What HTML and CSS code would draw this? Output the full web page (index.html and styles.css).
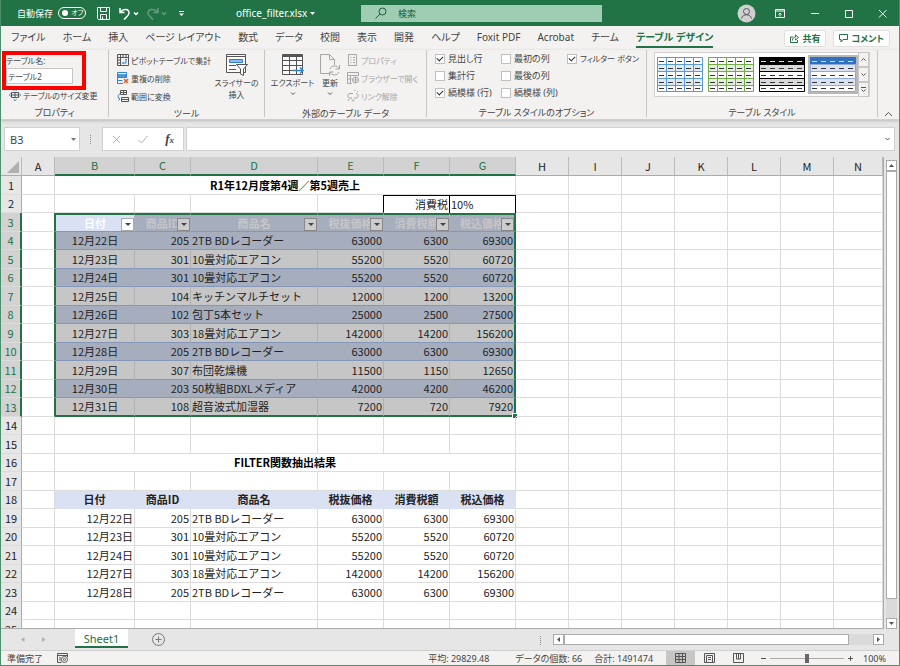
FILE: index.html
```html
<!DOCTYPE html>
<html lang="ja">
<head>
    <meta charset="UTF-8">
    <meta name="viewport" content="width=device-width, initial-scale=1.0">
    <title>office_filter.xlsx</title>
    <link rel="stylesheet" href="styles.css">
</head>
<body>
<div class="window">
    <header class="titlebar">
        <div class="quick">
            <span>自動保存</span>
            <button type="button" class="toggle"><i></i>オフ</button>
            <button type="button" aria-label="上書き保存"><svg width="13" height="13" viewBox="0 0 13 13"><path d="M.5.5h12v12h-11l-1-1zM3.5.5v4h6v-4M3.5 12.500v-5h6v5M5.500 12v-2.500" /></svg></button>
            <button type="button" class="undo" aria-label="元に戻す"><svg width="20" height="13" viewBox="0 0 20 13"><path class="thick" d="M1 1v4.500h4.500M1.500 5C4 1.500 10 1.500 10 6c0 3-3 4-5 6.500"/><path class="thick" d="M15 5.500l2 2 2-2"/></svg></button>
            <button type="button" class="faded" aria-label="やり直し"><svg width="20" height="13" viewBox="0 0 20 13"><path class="thick" d="M11 1v4.500H6.500M10.500 5C8 1.500 1 1.500 1 6c0 3 3 4 5 6.500"/><path class="thick" d="M15 5.500l2 2 2-2"/></svg></button>
            <button type="button" class="custom" aria-label="カスタマイズ"><svg width="7" height="7" viewBox="0 0 7 7"><path d="M1 1.500h5"/><path class="fill" d="M1 3.500h5l-2.500 2.500z"/></svg></button>
        </div>
        <div class="filename">office_filter.xlsx <svg width="5" height="3" viewBox="0 0 5 3"><path class="fill" d="M0 0h5L2.500 3z"/></svg></div>
        <label class="search">
            <svg width="12" height="12" viewBox="0 0 12 12"><circle cx="7.500" cy="4.500" r="3.500"/><path d="M5 7L.5 11.500"/></svg>
            <input type="text" placeholder="検索" aria-label="検索">
        </label>
        <div class="caption">
            <button type="button" class="user" aria-label="アカウント"><svg width="19" height="19" viewBox="0 0 19 19"><circle class="face" cx="9.500" cy="9.500" r="9"/><circle class="man" cx="9.500" cy="7.500" r="3"/><path class="man" d="M4.500 14.500c1-5 9-5 10 0"/></svg></button>
            <button type="button" aria-label="リボンの表示"><svg width="10" height="9" viewBox="0 0 10 9"><path d="M.5.500h9v8h-9zM.5 2h9M5 7.500V4M3.500 5.500L5 4l1.500 1.500"/></svg></button>
            <button type="button" aria-label="最小化"><svg width="9" height="9" viewBox="0 0 9 9"><path d="M1 4.500h8"/></svg></button>
            <button type="button" aria-label="最大化"><svg width="9" height="9" viewBox="0 0 9 9"><path d="M1.500 1.500h7v7h-7z"/></svg></button>
            <button type="button" aria-label="閉じる"><svg width="9" height="9" viewBox="0 0 9 9"><path d="M1 1l7.500 7.500M8.500 1L1 8.500"/></svg></button>
        </div>
    </header>

    <nav class="tabs">
        <a href="#">ファイル</a>
        <a href="#">ホーム</a>
        <a href="#">挿入</a>
        <a href="#">ページ レイアウト</a>
        <a href="#">数式</a>
        <a href="#">データ</a>
        <a href="#">校閲</a>
        <a href="#">表示</a>
        <a href="#">開発</a>
        <a href="#">ヘルプ</a>
        <a href="#">Foxit PDF</a>
        <a href="#">Acrobat</a>
        <a href="#">チーム</a>
        <a href="#" class="active">テーブル デザイン</a>
        <div class="share">
            <button type="button"><svg width="9" height="9" viewBox="0 0 9 9"><path d="M3 3H.5v5.500h7V6M2.500 6.500c0-2.500 1.500-3.500 3-3.500V1l3 2.500-3 2.500V4.500"/></svg>共有</button>
            <button type="button"><svg width="9" height="9" viewBox="0 0 9 9"><path d="M.5.500h8v5H4l-2 2.500V5.500H.5z"/></svg>コメント</button>
        </div>
    </nav>

    <section class="ribbon">
        <div class="group g-prop">
            <div class="tools stack">
                <label for="tname">テーブル名:</label>
                <input type="text" id="tname" value="テーブル2">
                <button type="button" class="cmd resize"><svg width="12" height="12" viewBox="0 0 12 12"><path d="M2.500 3.500h7v5h-7zM2.500 6h7M6 3.500v5"/><path class="blue" d="M4.500 1.500L6 .5l1.500 1M4.500 10.500l1.500 1 1.500-1M1.500 4.500L.5 6l1 1.500M10.500 4.500l1 1.500-1 1.500"/></svg>テーブルのサイズ変更</button>
                <div class="mark"></div>
            </div>
            <div class="name">プロパティ</div>
        </div>
        <div class="group g-tool">
            <div class="tools">
                <div class="list">
                    <button type="button" class="cmd"><svg width="12" height="12" viewBox="0 0 12 12"><path d="M.5.500h11v11H.5zM.5 3.500h11M3.500.5v11M6 .5v3M9 .5v3M.5 6h3M.5 9h3"/><path class="blue" d="M9 5v4H5.500M8 6l1-1 1 1M6.500 8l-1 1 1 1"/></svg>ピボットテーブルで集計</button>
                    <button type="button" class="cmd"><svg width="12" height="12" viewBox="0 0 12 12"><path class="bluefill" d="M1 3h8v2H1z"/><path class="blue" d="M.5.500h9v11h-9zM.5 3h9M.5 5.500h9M.5 8.500h5"/><path class="paper" d="M6 6h6v6H6z"/><path class="orange" d="M7 7l4 4M11 7l-4 4"/></svg>重複の削除</button>
                    <button type="button" class="cmd"><svg width="12" height="12" viewBox="0 0 12 12"><path d="M3.500.5h6v4h-6zM6.500.5v4M3.500 2.500h6M4.500 7.500h7v4h-7zM4.500 9.500h7"/><path class="blue" d="M3 4C.5 4 .5 9 3 9M1.500 7.500L3 9l-1.500 1.500"/></svg>範囲に変換</button>
                </div>
                <button type="button" class="big"><svg width="24" height="24" viewBox="0 0 24 24"><path class="line" d="M1.500 1.500h19v18h-19z"/><path d="M1.500 3.500h19M4 12.500h7M4 16.500h7"/><path class="bluefill" d="M4.500 6.500h13v3h-13z"/><path class="line" d="M11.500 11.500h11l-4 4.500v6.500l-3-1.500v-5z"/></svg><span>スライサーの<br>挿入</span></button>
            </div>
            <div class="name">ツール</div>
        </div>
        <div class="group g-ext">
            <div class="tools">
                <button type="button" class="big"><svg width="24" height="24" viewBox="0 0 24 24"><path class="line" d="M1.500 1.500h20v20h-20z"/><path class="dark" d="M1.500 3h20"/><path d="M1.500 7.500h20M1.500 12.500h20M1.500 17.500h20M8.500 1.500v20M15.500 1.500v20"/><path class="blue thick" d="M12 17.500h10M19 14.500l3 3-3 3"/></svg><span>エクスポート</span><svg class="chev" width="6" height="4" viewBox="0 0 6 4"><path d="M1 .5l2 2 2-2"/></svg></button>
                <button type="button" class="big narrow"><svg class="dim" width="24" height="24" viewBox="0 0 24 24"><path d="M2.500 1.500h9l5 5v14h-14zM11.500 1.500v5h5"/><path class="paper" d="M11 12h13v11H11z"/><path d="M12 16c1-4 8-4 9 0M21.500 12v4h-4M21 19c-1 4-8 4-9 0M11.500 23v-4h4"/></svg><span>更新</span><svg class="chev" width="6" height="4" viewBox="0 0 6 4"><path d="M1 .5l2 2 2-2"/></svg></button>
                <div class="list off">
                    <button type="button" class="cmd" disabled><svg width="12" height="12" viewBox="0 0 12 12"><path d="M1.500.500h8v11h-8zM3.500 3.500h1M6 3.500h2M3.500 6h1M6 6h2M3.500 8.500h1M6 8.500h2"/></svg>プロパティ</button>
                    <button type="button" class="cmd" disabled><svg width="12" height="12" viewBox="0 0 12 12"><path d="M.5.500h11v3H.5zM.5 3.500v8h4M.5 7h4M3.500 3.500v8"/><circle cx="8.500" cy="8" r="3"/><path d="M5.500 8h6M8.500 5v6"/></svg>ブラウザーで開く</button>
                    <button type="button" class="cmd" disabled><svg width="12" height="12" viewBox="0 0 12 12"><path d="M5 8H3C0 8 0 3.500 3 3.500h3M7 8h2c3 0 3-4.500 0-4.500M8 1V0M10 2l1-1M2 9l-1 2M5 9.500L7 11.500M7 9.500L5 11.500"/></svg>リンク解除</button>
                </div>
            </div>
            <div class="name">外部のテーブル データ</div>
        </div>
        <div class="group g-opt">
            <div class="tools checks">
                <label><input type="checkbox" checked>見出し行</label>
                <label><input type="checkbox">最初の列</label>
                <label class="long"><input type="checkbox" checked>フィルター ボタン</label>
                <label><input type="checkbox">集計行</label>
                <label class="wide"><input type="checkbox">最後の列</label>
                <label><input type="checkbox" checked>縞模様 (行)</label>
                <label><input type="checkbox">縞模様 (列)</label>
            </div>
            <div class="name">テーブル スタイルのオプション</div>
        </div>
        <div class="group g-style">
            <div class="tools">
                <div class="gallery">
                    <button type="button" class="s-blue" aria-label="青"><svg width="46" height="35" viewBox="0 0 46 35"><path class="shade" d="M0 7h46v7H0zM0 21h46v7H0z"/><path class="rule" d="M.5.500h45v34H.5zM0 7.500h46M0 14.500h46M0 21.500h46M0 28.500h46M9.500 0v35M18.500 0v35M27.500 0v35M36.500 0v35"/><path class="dash" d="M2 4.500h43M2 11.500h43M2 18.500h43M2 25.500h43M2 31.500h43"/></svg></button>
                    <button type="button" class="s-green" aria-label="緑"><svg width="46" height="35" viewBox="0 0 46 35"><path class="shade" d="M0 7h46v7H0zM0 21h46v7H0z"/><path class="rule" d="M.5.500h45v34H.5zM0 7.500h46M0 14.500h46M0 21.500h46M0 28.500h46M9.500 0v35M18.500 0v35M27.500 0v35M36.500 0v35"/><path class="dash" d="M2 4.500h43M2 11.500h43M2 18.500h43M2 25.500h43M2 31.500h43"/></svg></button>
                    <button type="button" class="s-black" aria-label="黒"><svg width="46" height="35" viewBox="0 0 46 35"><path class="shade" d="M0 7h46v7H0zM0 21h46v7H0z"/><path class="rule" d="M.5.500h45v34H.5zM0 7.500h46M0 14.500h46M0 21.500h46M0 28.500h46"/><path class="head" d="M0 0h46v7H0z"/><path class="dash" d="M2 11.500h43M2 18.500h43M2 25.500h43M2 31.500h43"/><path class="dash light" d="M2 4.500h43"/></svg></button>
                    <button type="button" class="s-navy" aria-label="濃い青"><svg width="46" height="35" viewBox="0 0 46 35"><path class="shade" d="M0 7h46v7H0zM0 21h46v7H0z"/><path class="rule" d="M.5.500h45v34H.5zM0 7.500h46M0 14.500h46M0 21.500h46M0 28.500h46"/><path class="head" d="M0 0h46v7H0z"/><path class="dash" d="M2 11.500h43M2 18.500h43M2 25.500h43M2 31.500h43"/><path class="dash light" d="M2 4.500h43"/></svg></button>
                    <div class="pager">
                        <button type="button" aria-label="上へ"><svg width="7" height="5" viewBox="0 0 7 5"><path d="M1.500 3.500l2-2 2 2"/></svg></button>
                        <button type="button" aria-label="下へ"><svg width="7" height="5" viewBox="0 0 7 5"><path d="M1.500 1.500l2 2 2-2"/></svg></button>
                        <button type="button" aria-label="その他"><svg width="7" height="6" viewBox="0 0 7 6"><path d="M1 .5h5M1.500 2.500l2 2 2-2"/></svg></button>
                    </div>
                </div>
            </div>
            <div class="name">テーブル スタイル</div>
        </div>
        <button type="button" class="collapse" aria-label="リボンを折りたたむ"><svg width="9" height="6" viewBox="0 0 9 6"><path d="M1 5l3.500-3.500L8 5"/></svg></button>
    </section>

    <section class="formula">
        <div class="namebox"><input type="text" value="B3" aria-label="名前ボックス"><svg width="5" height="3" viewBox="0 0 5 3"><path d="M0 0h5L2.500 3z"/></svg></div>
        <span class="dots"></span>
        <div class="fx">
            <button type="button" aria-label="キャンセル"><svg width="9" height="9" viewBox="0 0 9 9"><path d="M1 1l7 7M8 1L1 8"/></svg></button>
            <button type="button" aria-label="入力"><svg width="10" height="9" viewBox="0 0 10 9"><path d="M.5 5l3 3L9.500 1"/></svg></button>
            <button type="button" class="fn"><i>f</i><small>x</small></button>
        </div>
        <div class="entry"><input type="text" aria-label="数式バー"><svg width="7" height="5" viewBox="0 0 7 5"><path d="M1.500 1l2 2 2-2"/></svg></div>
    </section>

    <main class="sheet">
        <div class="cells">
            <table>
                <colgroup><col class="c-no"><col class="c-a"><col class="c-b"><col class="c-c"><col class="c-d"><col class="c-e"><col class="c-e"><col class="c-e"><col class="c-h"><col class="c-h"><col class="c-h"><col class="c-h"><col class="c-h"><col class="c-h"><col></colgroup>
                <thead>
                    <tr><th class="corner"></th><th>A</th><th class="on">B</th><th class="on">C</th><th class="on">D</th><th class="on">E</th><th class="on">F</th><th class="on">G</th><th>H</th><th>I</th><th>J</th><th>K</th><th>L</th><th>M</th><th>N</th></tr>
                </thead>
                <tbody>
                    <tr><th>1</th><td></td><td colspan="6" class="title">R1年12月度第4週／第5週売上</td><td></td><td></td><td></td><td></td><td></td><td></td><td></td></tr>
                    <tr><th>2</th><td></td><td></td><td></td><td></td><td class="edge"></td><td class="box num">消費税</td><td class="box">10%</td><td></td><td></td><td></td><td></td><td></td><td></td><td></td></tr>
                    <tr class="sel first"><th>3</th><td></td><td>日付<button type="button" class="filter" aria-label="日付"></button></td><td>商品ID<button type="button" class="filter" aria-label="商品ID"></button></td><td>商品名<button type="button" class="filter" aria-label="商品名"></button></td><td>税抜価格<button type="button" class="filter" aria-label="税抜価格"></button></td><td>消費税額<button type="button" class="filter" aria-label="消費税額"></button></td><td>税込価格<button type="button" class="filter" aria-label="税込価格"></button></td><td></td><td></td><td></td><td></td><td></td><td></td><td></td></tr>
                    <tr class="sel data"><th>4</th><td></td><td>12月22日</td><td>205</td><td>2TB BDレコーダー</td><td>63000</td><td>6300</td><td>69300</td><td></td><td></td><td></td><td></td><td></td><td></td><td></td></tr>
                    <tr class="sel data"><th>5</th><td></td><td>12月23日</td><td>301</td><td>10畳対応エアコン</td><td>55200</td><td>5520</td><td>60720</td><td></td><td></td><td></td><td></td><td></td><td></td><td></td></tr>
                    <tr class="sel data"><th>6</th><td></td><td>12月24日</td><td>301</td><td>10畳対応エアコン</td><td>55200</td><td>5520</td><td>60720</td><td></td><td></td><td></td><td></td><td></td><td></td><td></td></tr>
                    <tr class="sel data"><th>7</th><td></td><td>12月25日</td><td>104</td><td>キッチンマルチセット</td><td>12000</td><td>1200</td><td>13200</td><td></td><td></td><td></td><td></td><td></td><td></td><td></td></tr>
                    <tr class="sel data"><th>8</th><td></td><td>12月26日</td><td>102</td><td>包丁5本セット</td><td>25000</td><td>2500</td><td>27500</td><td></td><td></td><td></td><td></td><td></td><td></td><td></td></tr>
                    <tr class="sel data"><th>9</th><td></td><td>12月27日</td><td>303</td><td>18畳対応エアコン</td><td>142000</td><td>14200</td><td>156200</td><td></td><td></td><td></td><td></td><td></td><td></td><td></td></tr>
                    <tr class="sel data"><th>10</th><td></td><td>12月28日</td><td>205</td><td>2TB BDレコーダー</td><td>63000</td><td>6300</td><td>69300</td><td></td><td></td><td></td><td></td><td></td><td></td><td></td></tr>
                    <tr class="sel data"><th>11</th><td></td><td>12月29日</td><td>307</td><td>布団乾燥機</td><td>11500</td><td>1150</td><td>12650</td><td></td><td></td><td></td><td></td><td></td><td></td><td></td></tr>
                    <tr class="sel data"><th>12</th><td></td><td>12月30日</td><td>203</td><td>50枚組BDXLメディア</td><td>42000</td><td>4200</td><td>46200</td><td></td><td></td><td></td><td></td><td></td><td></td><td></td></tr>
                    <tr class="sel data last"><th>13</th><td></td><td>12月31日</td><td>108</td><td>超音波式加湿器</td><td>7200</td><td>720</td><td>7920<i class="handle"></i></td><td></td><td></td><td></td><td></td><td></td><td></td><td></td></tr>
                    <tr><th>14</th><td></td><td></td><td></td><td></td><td></td><td></td><td></td><td></td><td></td><td></td><td></td><td></td><td></td><td></td></tr>
                    <tr><th>15</th><td></td><td></td><td></td><td></td><td></td><td></td><td></td><td></td><td></td><td></td><td></td><td></td><td></td><td></td></tr>
                    <tr><th>16</th><td></td><td colspan="6" class="title">FILTER関数抽出結果</td><td></td><td></td><td></td><td></td><td></td><td></td><td></td></tr>
                    <tr><th>17</th><td></td><td></td><td></td><td></td><td></td><td></td><td></td><td></td><td></td><td></td><td></td><td></td><td></td><td></td></tr>
                    <tr class="head"><th>18</th><td></td><td>日付</td><td>商品ID</td><td>商品名</td><td>税抜価格</td><td>消費税額</td><td>税込価格</td><td></td><td></td><td></td><td></td><td></td><td></td><td></td></tr>
                    <tr class="data"><th>19</th><td></td><td>12月22日</td><td>205</td><td>2TB BDレコーダー</td><td>63000</td><td>6300</td><td>69300</td><td></td><td></td><td></td><td></td><td></td><td></td><td></td></tr>
                    <tr class="data"><th>20</th><td></td><td>12月23日</td><td>301</td><td>10畳対応エアコン</td><td>55200</td><td>5520</td><td>60720</td><td></td><td></td><td></td><td></td><td></td><td></td><td></td></tr>
                    <tr class="data"><th>21</th><td></td><td>12月24日</td><td>301</td><td>10畳対応エアコン</td><td>55200</td><td>5520</td><td>60720</td><td></td><td></td><td></td><td></td><td></td><td></td><td></td></tr>
                    <tr class="data"><th>22</th><td></td><td>12月27日</td><td>303</td><td>18畳対応エアコン</td><td>142000</td><td>14200</td><td>156200</td><td></td><td></td><td></td><td></td><td></td><td></td><td></td></tr>
                    <tr class="data"><th>23</th><td></td><td>12月28日</td><td>205</td><td>2TB BDレコーダー</td><td>63000</td><td>6300</td><td>69300</td><td></td><td></td><td></td><td></td><td></td><td></td><td></td></tr>
                    <tr><th>24</th><td></td><td></td><td></td><td></td><td></td><td></td><td></td><td></td><td></td><td></td><td></td><td></td><td></td><td></td></tr>
                    <tr><th>25</th><td></td><td></td><td></td><td></td><td></td><td></td><td></td><td></td><td></td><td></td><td></td><td></td><td></td><td></td></tr>
                </tbody>
            </table>
        </div>
        <div class="vscroll">
            <button type="button" aria-label="上"><svg width="5" height="3" viewBox="0 0 5 3"><path d="M0 3h5L2.500 0z"/></svg></button>
            <div class="thumb"></div>
            <div class="track"></div>
            <button type="button" aria-label="下"><svg width="5" height="3" viewBox="0 0 5 3"><path d="M0 0h5L2.500 3z"/></svg></button>
        </div>
    </main>

    <section class="sheetbar">
        <div class="move">
            <svg width="4" height="5" viewBox="0 0 4 5"><path d="M3.500 0v5L0 2.500z"/></svg>
            <svg width="4" height="5" viewBox="0 0 4 5"><path d="M0 0v5l3.500-2.500z"/></svg>
        </div>
        <a href="#" class="sheettab">Sheet1</a>
        <button type="button" class="add" aria-label="新しいシート"><svg width="13" height="13" viewBox="0 0 13 13"><circle cx="6.500" cy="6.500" r="6"/><path d="M3.500 6.500h6M6.500 3.500v6"/></svg></button>
        <span class="dots"></span>
        <div class="hscroll">
            <button type="button" aria-label="左"><svg width="3" height="5" viewBox="0 0 3 5"><path d="M3 0v5L0 2.500z"/></svg></button>
            <div class="thumb"></div>
            <div class="track"></div>
            <button type="button" aria-label="右"><svg width="3" height="5" viewBox="0 0 3 5"><path d="M0 0v5l3-2.500z"/></svg></button>
        </div>
    </section>

    <footer class="status">
        <span class="ready">準備完了</span>
        <svg width="11" height="10" viewBox="0 0 11 10"><path d="M10.500 4V.5H.5v9h4M.5 2.500h10M2 5h2M2 7h2"/><circle cx="7.500" cy="6.500" r="3"/><circle class="rec" cx="7.500" cy="6.500" r="1"/></svg>
        <span class="avg">平均: 29829.48</span>
        <span class="count">データの個数: 66</span>
        <span class="sum">合計: 1491474</span>
        <div class="views">
            <button type="button" class="on" aria-label="標準"><svg width="11" height="10" viewBox="0 0 11 10"><path d="M.5.500h10v9H.5zM.5 3.500h10M.5 6.500h10M4 .5v9M7.500.5v9"/></svg></button>
            <button type="button" aria-label="ページ レイアウト表示"><svg width="11" height="10" viewBox="0 0 11 10"><path d="M.5.500h10v9H.5zM2.500 2.500h6v7h-6zM4 4.500h3M4 6.500h3"/></svg></button>
            <button type="button" aria-label="改ページ プレビュー"><svg width="11" height="10" viewBox="0 0 11 10"><path d="M.5.500h10v9H.5zM3.500.5v5.500h4V.5M5.500.500v5.500"/></svg></button>
        </div>
        <button type="button" class="zoom" aria-label="縮小"><svg width="7" height="7" viewBox="0 0 7 7"><path d="M1 3.500h5"/></svg></button>
        <input type="range" min="0" max="100" value="50" aria-label="ズーム">
        <button type="button" class="zoom" aria-label="拡大"><svg width="7" height="7" viewBox="0 0 7 7"><path d="M1 3.500h5M3.500 1v5"/></svg></button>
        <span class="percent">100%</span>
    </footer>
</div>
</body>
</html>
```
FILE: styles.css
```css
*{
    box-sizing: border-box;
}
body{
    margin: 0;
    font-family: "Noto Sans", "Noto Sans CJK JP", sans-serif;
    font-size: 10px;
    font-feature-settings: "palt";
    color: #444;
}
button, input{
    font: inherit;
    font-feature-settings: inherit;
    color: inherit;
    margin: 0;
    padding: 0;
    border: 0;
    background: none;
    outline: none;
}
a{
    color: inherit;
    text-decoration: none;
}
svg{
    display: block;
    flex: none;
    fill: none;
    stroke: #555;
}
.window{
    display: flex;
    flex-direction: column;
    height: 100vh;
    border: 1px solid #4c8f6c;
    border-top: 0;
    background: #e6e6e6;
    overflow: hidden;
}

/* title bar */
.titlebar{
    display: flex;
    align-items: center;
    height: 26px;
    flex: none;
    background: #217346;
    color: #fff;
}
.titlebar svg{
    stroke: #fff;
}
.titlebar .thick{
    stroke-width: 1.5;
}
.titlebar .fill{
    fill: #fff;
    stroke: none;
}
.quick{
    display: flex;
    align-items: center;
    width: 235px;
    padding-left: 16px;
    font-size: 9px;
    white-space: nowrap;
}
.toggle{
    display: flex;
    align-items: center;
    gap: 3px;
    width: 28px;
    height: 12px;
    margin: 0 11px 0 5px;
    padding-left: 3px;
    border: 1px solid #fff;
    border-radius: 6px;
    font-size: 7px;
    line-height: 10px;
}
.toggle i{
    flex: none;
    width: 6px;
    height: 6px;
    border-radius: 3px;
    background: #fff;
}
.undo{
    margin: 0 8px 0 9px;
}
.faded{
    opacity: .3;
}
.custom{
    margin-left: 11px;
}
.filename{
    display: flex;
    align-items: center;
    gap: 3px;
    width: 125px;
}
.search{
    display: flex;
    align-items: center;
    gap: 11px;
    flex: 1;
    height: 17px;
    padding-left: 14px;
    background: #9fcdb3;
    color: #1c5c3a;
}
.search svg{
    stroke: #1c5c3a;
}
.search input{
    flex: 1;
    min-width: 0;
    font-size: 9px;
}
.search input::placeholder{
    color: #1c5c3a;
}
.caption{
    display: flex;
    align-items: center;
    justify-content: flex-end;
    width: 297px;
}
.caption button{
    display: flex;
    justify-content: center;
    width: 34px;
}
.caption .face{
    fill: #d0d0d0;
    stroke: none;
}
.caption .man{
    stroke: #555;
}

/* ribbon tabs */
.tabs{
    display: flex;
    align-items: center;
    gap: 17px;
    height: 24px;
    flex: none;
    padding: 0 9px 0 10px;
    background: #f3f2f1;
    white-space: nowrap;
}
.tabs a{
    line-height: 18px;
    border-bottom: 2px solid transparent;
}
.tabs .active{
    border-color: #217346;
    color: #217346;
    font-weight: bold;
}
.share{
    display: flex;
    gap: 7px;
    margin-left: auto;
}
.share button{
    display: flex;
    align-items: center;
    gap: 3px;
    height: 17px;
    padding: 0 5px;
    border: 1px solid #e1dfdd;
    border-radius: 2px;
    background: #fff;
    color: #217346;
    font-size: 9px;
    font-weight: bold;
}
.share svg{
    stroke: #217346;
}

/* ribbon */
.ribbon{
    position: relative;
    display: flex;
    height: 70px;
    flex: none;
    background: #f3f2f1;
    border-bottom: 1px solid #d0d0d0;
    box-shadow: 0 1px 3px #bbb;
    white-space: nowrap;
    z-index: 1;
}
.group{
    display: flex;
    flex-direction: column;
    flex: none;
    height: 67px;
    border-right: 1px solid #c8c6c4;
}
.g-prop{
    width: 108px;
}
.g-tool{
    width: 156px;
}
.g-ext{
    width: 162px;
}
.g-opt{
    width: 220px;
}
.g-style{
    width: 231px;
}
.tools{
    display: flex;
    flex: 1;
}
.name{
    height: 13px;
    line-height: 18px;
    text-align: center;
    font-size: 9px;
}
.stack{
    position: relative;
    flex-direction: column;
    align-items: flex-start;
    padding-left: 5px;
}
.stack label{
    line-height: 14px;
    padding-top: 4px;
    font-size: 8px;
}
.stack input{
    width: 67px;
    height: 16px;
    border: 1px solid #c8c6c4;
    background: #fff;
    padding-left: 1px;
    font-size: 8px;
}
.mark{
    position: absolute;
    top: 1px;
    left: 1px;
    width: 84px;
    height: 39px;
    border: 4px solid #f00;
}
.cmd{
    display: flex;
    align-items: center;
    gap: 2px;
    height: 18px;
    font-size: 8px;
}
.resize{
    margin: 2px 0 0 3px;
}
.list{
    padding: 1px 0 0 8px;
    width: 100px;
}
.off{
    width: 80px;
    padding-left: 7px;
}
.off .cmd{
    color: #a6a6a6;
}
.off svg, .dim{
    stroke: #a6a6a6;
}
.blue{
    stroke: #2b88d8;
}
.bluefill{
    fill: #83beec;
    stroke: #2b7cd3;
}
.orange{
    stroke: #d8622b;
    stroke-width: 1.5;
}
.paper{
    fill: #f3f2f1;
    stroke: none;
}
.line{
    fill: #fafafa;
}
.dark{
    stroke-width: 2;
}
.blue.thick{
    stroke-width: 1.5;
}
.big{
    display: flex;
    flex-direction: column;
    align-items: center;
    width: 55px;
    padding-top: 3px;
    font-size: 8px;
    line-height: 12px;
}
.narrow{
    width: 20px;
}
.chev{
    margin-top: 3px;
}
.checks{
    display: grid;
    grid-template-columns: 66px 66px 1fr;
    grid-auto-rows: 17px;
    padding-left: 8px;
}
.checks label{
    display: flex;
    align-items: center;
    gap: 3px;
    font-size: 9px;
}
.checks .long{
    font-size: 8px;
}
.checks .wide{
    grid-column: 2 / 4;
}
.checks input{
    appearance: none;
    width: 10px;
    height: 10px;
    border: 1px solid #c0c0c0;
    background: #fff;
}
.checks input:checked::before{
    content: "";
    display: block;
    width: 5px;
    height: 3px;
    margin: 1px;
    border-left: 1px solid #333;
    border-bottom: 1px solid #333;
    transform: rotate(-45deg);
}
.g-style .tools{
    padding: 2px 0 0 7px;
}
.gallery{
    display: flex;
    align-items: center;
    width: 216px;
    height: 45px;
    border: 1px solid #d0d0d0;
    background: #fff;
}
.gallery > button{
    padding: 2px;
    margin-right: 1px;
}
.gallery .rule{
    stroke: #5b9bd5;
}
.gallery .shade{
    fill: #ddebf7;
    stroke: none;
}
.gallery .dash{
    stroke: #333;
    stroke-dasharray: 5 4;
}
.gallery .light{
    stroke: #ddd;
}
.gallery .head{
    fill: #000;
    stroke: none;
}
.gallery .s-green .rule{
    stroke: #70ad47;
}
.gallery .s-green .shade{
    fill: #e2efda;
}
.gallery .s-black .rule{
    stroke: #000;
}
.gallery .s-black .shade{
    fill: #d9d9d9;
}
.gallery .s-navy{
    background: #b8b8b8;
    margin-right: 0;
}
.gallery .s-navy svg{
    background: #fff;
}
.gallery .s-navy .rule{
    stroke: #8ea9db;
}
.gallery .s-navy .shade{
    fill: #d9e1f2;
}
.gallery .s-navy .head{
    fill: #2f6fc4;
}
.pager{
    display: flex;
    flex-direction: column;
    width: 12px;
    height: 45px;
    margin-left: auto;
}
.pager button{
    display: flex;
    align-items: center;
    justify-content: center;
    flex: 1;
    border: 1px solid #c8c6c4;
    background: #f3f2f1;
}
.collapse{
    margin: 60px 6px 0 auto;
    height: 8px;
}

/* formula bar */
.formula{
    display: flex;
    align-items: flex-start;
    height: 37px;
    flex: none;
    padding: 7px 4px 0 3px;
}
.namebox, .fx, .entry{
    display: flex;
    align-items: center;
    height: 24px;
    border: 1px solid #d0d0d0;
    background: #fff;
}
.namebox{
    width: 76px;
    padding: 0 4px 0 5px;
}
.namebox input{
    width: 61px;
    font-size: 11px;
}
.namebox svg{
    fill: #777;
    stroke: none;
}
.dots{
    height: 9px;
    margin: 8px 11px 0 10px;
    border-left: 1px dotted #888;
}
.fx{
    width: 82px;
    margin-right: 2px;
}
.fx button{
    display: flex;
    justify-content: center;
    align-items: baseline;
    width: 27px;
}
.fx svg{
    stroke: #b0b0b0;
}
.fn{
    font-family: "Liberation Serif", serif;
    font-size: 13px;
    font-weight: bold;
}
.fn small{
    font-size: 9px;
    font-style: italic;
}
.entry{
    flex: 1;
    padding-right: 3px;
}
.entry input{
    flex: 1;
    min-width: 0;
    font-size: 11px;
}

/* grid */
.sheet{
    display: flex;
    flex: 1;
    min-height: 0;
}
.cells{
    flex: 1;
    overflow: hidden;
    border-right: 1px solid #ababab;
    border-bottom: 1px solid #ababab;
    font-family: "Noto Sans CJK JP", sans-serif;
    font-size: 11px;
    font-feature-settings: normal;
    color: #222;
}
table{
    width: 100%;
    table-layout: fixed;
    border-collapse: separate;
    border-spacing: 0;
    background: #fff;
}
.c-no{
    width: 21px;
}
.c-a{
    width: 33px;
}
.c-b{
    width: 80px;
}
.c-c{
    width: 56px;
}
.c-d{
    width: 127px;
}
.c-e{
    width: 66px;
}
.c-h{
    width: 53px;
}
th, td{
    position: relative;
    padding: 0 1px;
    line-height: 15px;
    white-space: nowrap;
    border-right: 1px solid #dcdcdc;
    border-bottom: 1px solid #dcdcdc;
}
th{
    padding: 0;
    background: #e6e6e6;
    font-weight: normal;
    border-right-color: #ababab;
}
thead th{
    height: 19px;
    border-right-color: #bbb;
    border-bottom-color: #ababab;
}
thead .on{
    background: #d2d2d2;
    color: #217346;
    border-bottom: 2px solid #217346;
}
.corner::after{
    content: "";
    position: absolute;
    right: 2px;
    bottom: 2px;
    border-left: 12px solid transparent;
    border-bottom: 12px solid #b0b0b0;
}
tbody tr{
    height: 18px;
}
tbody tr:nth-child(odd){
    height: 19px;
}
.title{
    text-align: center;
    font-weight: bold;
    color: #000;
}
.num{
    text-align: right;
}
.edge{
    border-right-color: #000;
}
.box{
    border-top: 1px solid #000;
    border-right-color: #000;
    border-bottom: 0;
}
.head td{
    font-weight: bold;
    text-align: center;
}
.head td:nth-child(n+3):nth-child(-n+8){
    background: #d9e1f2;
    border-color: #d9e1f2;
}
.data td{
    text-align: right;
}
.data td:nth-child(5){
    text-align: left;
}

/* selected range */
.sel th{
    background: #d2d2d2;
    color: #217346;
    border-right: 2px solid #217346;
}
.sel td:nth-child(2){
    border-right: 1px solid #217346;
}
.sel td:nth-child(3){
    text-align: center;
}
.sel td:nth-child(n+3):nth-child(-n+8){
    background: #c6c6c6;
    border-right-color: #b0b0b0;
    border-bottom-color: #8497b9;
}
.sel:nth-child(even) td:nth-child(n+3):nth-child(-n+8){
    background: #a6aebe;
    border-right-color: #a6aebe;
}
.first td:nth-child(n+3):nth-child(-n+8){
    background: #a6aebe;
    border-top: 2px solid #217346;
    border-right-color: #a6aebe;
    color: #c6c6c6;
    font-weight: bold;
    text-align: center;
}
.first td:nth-child(3):nth-child(-n+8){
    background: #d9e1f2;
    color: #fff;
}
.last td:nth-child(n+3):nth-child(-n+8){
    border-bottom: 2px solid #217346;
}
tbody .sel:nth-child(n) td:nth-child(3):nth-child(n){
    border-left: 1px solid #217346;
}
tbody .sel:nth-child(n) td:nth-child(8):nth-child(n){
    border-right: 2px solid #217346;
}
.filter{
    position: absolute;
    right: 0;
    bottom: 0;
    width: 13px;
    height: 13px;
    border: 1px solid #888;
    background: #ccc;
}
td:nth-child(3) .filter{
    background: #fff;
    border-color: #aaa;
}
.filter::before{
    content: "";
    position: absolute;
    left: 3px;
    top: 4px;
    border: 3px solid transparent;
    border-top-color: #444;
    border-bottom: 0;
}
.handle{
    position: absolute;
    right: -3px;
    bottom: -3px;
    width: 5px;
    height: 5px;
    background: #217346;
    border-top: 1px solid #fff;
    border-left: 1px solid #fff;
}
.vscroll{
    display: flex;
    flex-direction: column;
    width: 15px;
    padding: 3px 2px 0 2px;
}
.vscroll svg, .hscroll svg, .move svg{
    fill: #555;
    stroke: none;
}
.vscroll button, .hscroll button{
    display: flex;
    align-items: center;
    justify-content: center;
    flex: none;
    width: 11px;
    height: 11px;
    border: 1px solid #ababab;
    background: #fff;
}
.vscroll .thumb{
    flex: 1;
    border: 1px solid #ababab;
    background: #fff;
}
.vscroll .track{
    height: 19px;
    background: #dadada;
}

/* sheet tabs */
.sheetbar{
    display: flex;
    height: 21px;
    flex: none;
}
.move{
    display: flex;
    gap: 17px;
    width: 74px;
    padding: 8px 0 0 20px;
}
.sheetbar .move svg{
    fill: #b0b0b0;
}
.sheettab{
    width: 53px;
    height: 19px;
    line-height: 19px;
    text-align: center;
    font-size: 11px;
    color: #217346;
    background: #fff;
    border-bottom: 2px solid #217346;
}
.add{
    margin-left: 24px;
}
.add svg{
    stroke: #777;
}
.sheetbar .dots{
    margin: 7px 12px 0 auto;
}
.hscroll{
    display: flex;
    width: 331px;
    margin: 5px 15px 0 0;
}
.hscroll .thumb{
    flex: 1;
    height: 11px;
    border: 1px solid #ababab;
    background: #fff;
}
.hscroll .track{
    width: 24px;
    height: 11px;
    background: #dadada;
}

/* status bar */
.status{
    display: flex;
    align-items: center;
    height: 15px;
    flex: none;
    padding: 0 13px 0 6px;
    border-top: 1px solid #d0d0d0;
    background: #f3f2f1;
    font-size: 9px;
    white-space: nowrap;
}
.ready{
    margin-right: 14px;
}
.avg{
    margin-left: auto;
}
.count{
    margin-left: 26px;
}
.sum{
    margin: 0 13px 0 12px;
}
.views{
    display: flex;
    align-self: stretch;
    margin-right: 7px;
}
.views button{
    display: flex;
    align-items: center;
    justify-content: center;
    width: 29px;
}
.views .on{
    background: #c8c6c4;
}
.status input{
    appearance: none;
    width: 74px;
    height: 9px;
    margin: 0 3px;
    background: linear-gradient(#aaa, #aaa) center / 100% 1px no-repeat;
}
.status input::-webkit-slider-thumb{
    appearance: none;
    width: 4px;
    height: 9px;
    background: #666;
}
.percent{
    margin-left: 9px;
}
```
